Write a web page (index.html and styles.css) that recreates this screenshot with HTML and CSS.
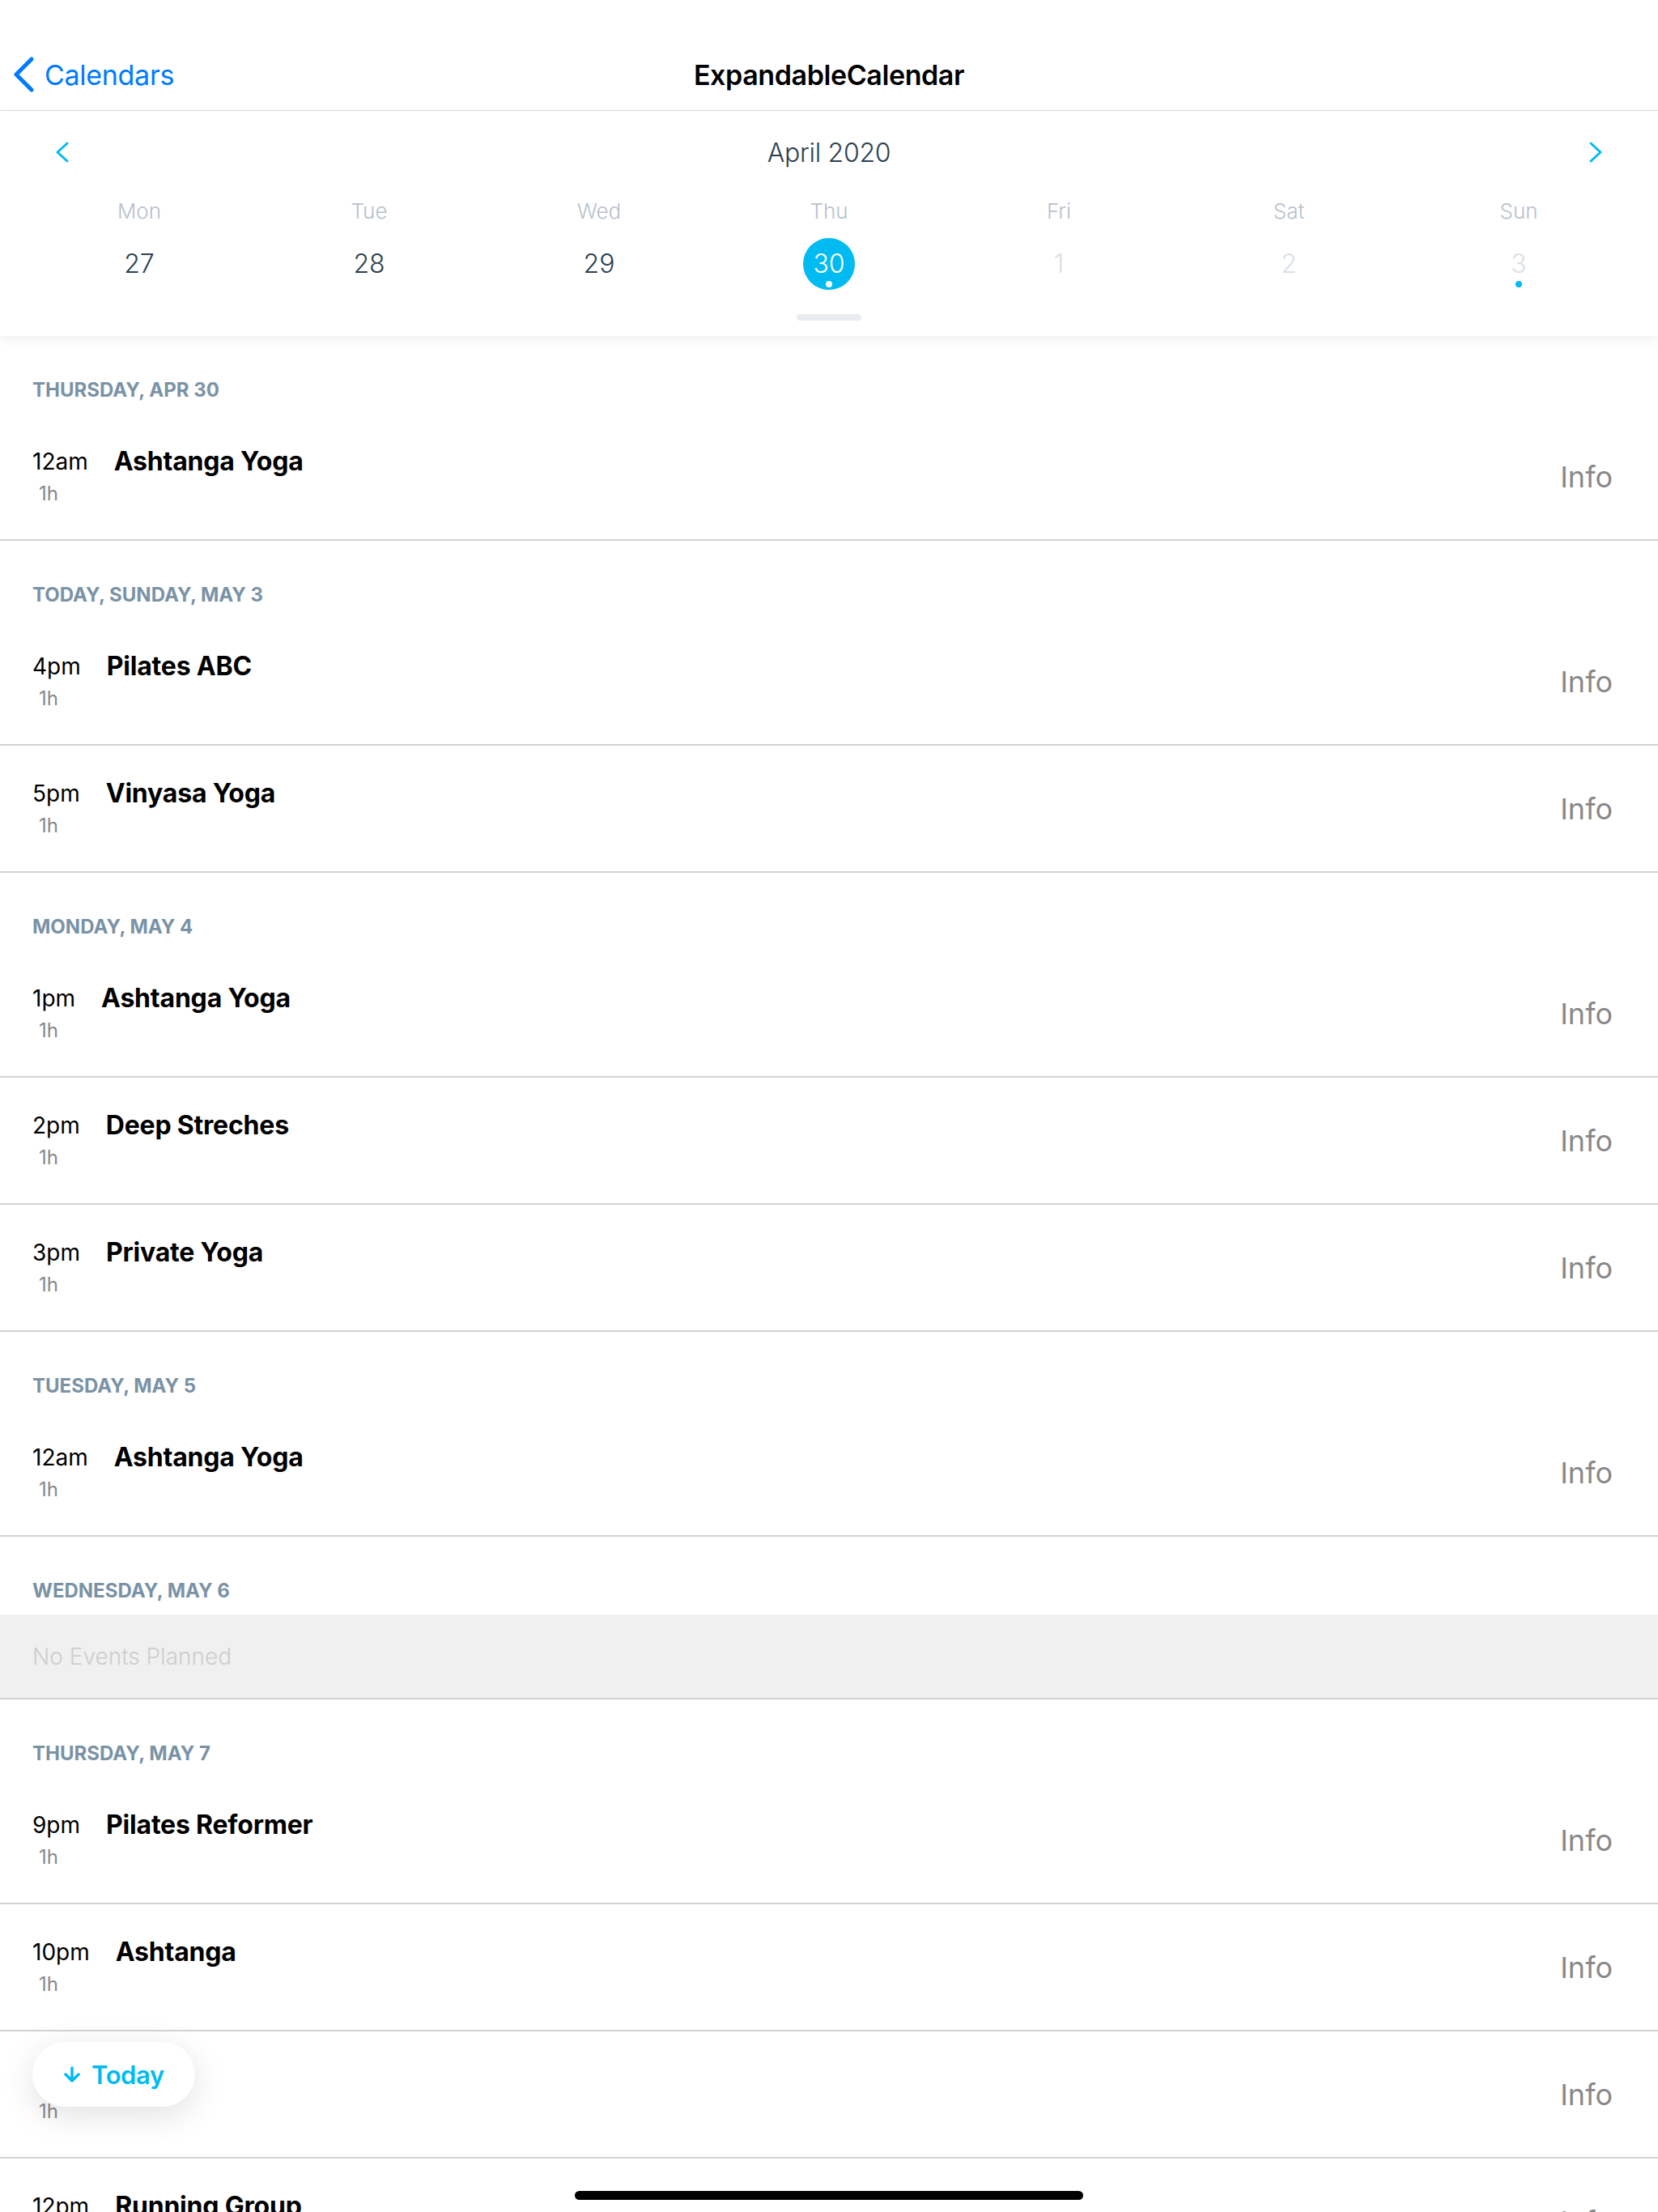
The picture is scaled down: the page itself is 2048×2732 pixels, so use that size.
FILE: index.html
```html
<!DOCTYPE html>
<html lang="en">
<head>
    <meta charset="UTF-8">
    <meta name="viewport" content="width=device-width, initial-scale=1.0">
    <title>ExpandableCalendar</title>
    <link rel="stylesheet" href="styles.css">
</head>
<body>

    <!-- Navigation Bar -->
    <header class="nav-bar">
        <a href="#" class="back-link">
            <svg class="back-chevron" width="26" height="44" viewBox="0 0 26 44">
                <polyline points="23,3 4,22 23,41" fill="none" stroke="#007aff" stroke-width="5" stroke-linecap="round" stroke-linejoin="round"/>
            </svg>
            Calendars
        </a>
        <h1 class="nav-title">ExpandableCalendar</h1>
        <div></div>
    </header>

    <!-- Week Calendar -->
    <section class="calendar">
        <div class="month-header">
            <svg width="20" height="28" viewBox="0 0 20 28">
                <polyline points="15,3 3,14 15,25" fill="none" stroke="#00bbf2" stroke-width="3" stroke-linecap="round" stroke-linejoin="round"/>
            </svg>
            <div class="month-title">April 2020</div>
            <svg width="20" height="28" viewBox="0 0 20 28">
                <polyline points="5,3 17,14 5,25" fill="none" stroke="#00bbf2" stroke-width="3" stroke-linecap="round" stroke-linejoin="round"/>
            </svg>
        </div>
        <div class="week">
            <div class="day"><span class="day-name">Mon</span><span class="day-num"><span>27</span><i class="dot"></i></span></div>
            <div class="day"><span class="day-name">Tue</span><span class="day-num"><span>28</span><i class="dot"></i></span></div>
            <div class="day"><span class="day-name">Wed</span><span class="day-num"><span>29</span><i class="dot"></i></span></div>
            <div class="day"><span class="day-name">Thu</span><span class="day-num selected"><span>30</span><i class="dot marked"></i></span></div>
            <div class="day"><span class="day-name">Fri</span><span class="day-num other-month"><span>1</span><i class="dot"></i></span></div>
            <div class="day"><span class="day-name">Sat</span><span class="day-num other-month"><span>2</span><i class="dot"></i></span></div>
            <div class="day"><span class="day-name">Sun</span><span class="day-num other-month"><span>3</span><i class="dot marked"></i></span></div>
        </div>
        <div class="knob"></div>
    </section>

    <!-- Agenda List -->
    <main class="agenda">
        <div class="section-title">Thursday, Apr 30</div>
        <div class="item">
            <div class="time-col"><span class="hour">12am</span><span class="duration">1h</span></div>
            <div class="item-title">Ashtanga Yoga</div>
            <a href="#" class="info">Info</a>
        </div>

        <div class="section-title">Today, Sunday, May 3</div>
        <div class="item">
            <div class="time-col"><span class="hour">4pm</span><span class="duration">1h</span></div>
            <div class="item-title">Pilates ABC</div>
            <a href="#" class="info">Info</a>
        </div>
        <div class="item">
            <div class="time-col"><span class="hour">5pm</span><span class="duration">1h</span></div>
            <div class="item-title">Vinyasa Yoga</div>
            <a href="#" class="info">Info</a>
        </div>

        <div class="section-title">Monday, May 4</div>
        <div class="item">
            <div class="time-col"><span class="hour">1pm</span><span class="duration">1h</span></div>
            <div class="item-title">Ashtanga Yoga</div>
            <a href="#" class="info">Info</a>
        </div>
        <div class="item">
            <div class="time-col"><span class="hour">2pm</span><span class="duration">1h</span></div>
            <div class="item-title">Deep Streches</div>
            <a href="#" class="info">Info</a>
        </div>
        <div class="item">
            <div class="time-col"><span class="hour">3pm</span><span class="duration">1h</span></div>
            <div class="item-title">Private Yoga</div>
            <a href="#" class="info">Info</a>
        </div>

        <div class="section-title">Tuesday, May 5</div>
        <div class="item">
            <div class="time-col"><span class="hour">12am</span><span class="duration">1h</span></div>
            <div class="item-title">Ashtanga Yoga</div>
            <a href="#" class="info">Info</a>
        </div>

        <div class="section-title">Wednesday, May 6</div>
        <div class="empty-item">No Events Planned</div>

        <div class="section-title">Thursday, May 7</div>
        <div class="item">
            <div class="time-col"><span class="hour">9pm</span><span class="duration">1h</span></div>
            <div class="item-title">Pilates Reformer</div>
            <a href="#" class="info">Info</a>
        </div>
        <div class="item">
            <div class="time-col"><span class="hour">10pm</span><span class="duration">1h</span></div>
            <div class="item-title">Ashtanga</div>
            <a href="#" class="info">Info</a>
        </div>
        <div class="item">
            <div class="time-col"><span class="hour">11pm</span><span class="duration">1h</span></div>
            <div class="item-title">TRX</div>
            <a href="#" class="info">Info</a>
        </div>
        <div class="item">
            <div class="time-col"><span class="hour">12pm</span><span class="duration">1h</span></div>
            <div class="item-title">Running Group</div>
            <a href="#" class="info">Info</a>
        </div>
    </main>

    <!-- Today Button -->
    <button class="today-button">
        <svg width="22" height="20" viewBox="0 0 22 20">
            <path d="M11 2 V18 M3 10 L11 18 L19 10" fill="none" stroke="#00bbf2" stroke-width="3.5" stroke-linecap="round" stroke-linejoin="round"/>
        </svg>
        Today
    </button>

    <!-- Home Indicator -->
    <div class="home-indicator"></div>

</body>
</html>
```

FILE: styles.css
```css
body {
    margin: 0;
    height: 2732px;
    overflow: hidden;
    position: relative;
    font-family: Inter, "Noto Sans", sans-serif;
    background-color: white;
    display: flex;
    flex-direction: column;
}

/* Navigation Bar */
.nav-bar {
    padding-top: 48px; /* status bar */
    height: 88px;
    border-bottom: 1px solid #e0e0e0;
    display: grid;
    grid-template-columns: 1fr auto 1fr;
    align-items: center;
    flex-shrink: 0;
}

.back-link {
    display: flex;
    align-items: center;
    gap: 13px;
    padding-left: 16px;
    color: #007aff;
    font-size: 34px;
    letter-spacing: -0.3px;
    text-decoration: none;
}

.nav-title {
    margin: 0;
    font-size: 34px;
    font-weight: 600;
    letter-spacing: -0.4px;
    color: #000;
}

/* Calendar */
.calendar {
    position: relative;
    z-index: 1;
    background-color: white;
    padding-top: 19px;
    padding-bottom: 19px;
    display: flex;
    flex-direction: column;
    align-items: center;
    box-shadow: 0 3px 14px rgba(0, 0, 0, 0.07);
    flex-shrink: 0;
}

.month-header {
    width: 100%;
    box-sizing: border-box;
    height: 64px;
    padding: 0 68px;
    display: flex;
    justify-content: space-between;
    align-items: center;
}

.month-title {
    font-size: 32px;
    font-weight: 300;
    letter-spacing: -0.3px;
    color: #2d4150;
}

.week {
    width: 100%;
    box-sizing: border-box;
    padding: 0 30px;
    margin-top: 25px;
    display: grid;
    grid-template-columns: repeat(7, 1fr);
}

.day {
    display: flex;
    flex-direction: column;
    align-items: center;
}

.day-name {
    font-size: 26px;
    line-height: 32px;
    font-weight: 300;
    color: #b6c1cd;
}

.day-num {
    margin-top: 17px;
    width: 64px;
    height: 64px;
    border-radius: 50%;
    box-sizing: border-box;
    padding-top: 13px;
    display: flex;
    flex-direction: column;
    align-items: center;
    font-size: 32px;
    line-height: 38px;
    font-weight: 300;
    color: #2d4150;
}

.day-num.other-month {
    color: #d9e1e8;
}

.day-num.selected {
    background-color: #00bbf2;
    color: white;
}

.dot {
    margin-top: 2px;
    width: 8px;
    height: 8px;
    border-radius: 50%;
}

.dot.marked {
    background-color: #00bbf2;
}

.selected .dot.marked {
    background-color: white;
}

.knob {
    margin-top: 30px;
    width: 80px;
    height: 8px;
    border-radius: 4px;
    background-color: #e8ecf0;
}

/* Agenda List */
.agenda {
    flex: 1;
    background-color: white;
}

.section-title {
    padding: 51px 40px 14px;
    font-size: 24px;
    line-height: 31px;
    font-weight: 700;
    text-transform: uppercase;
    color: #7a92a5;
}

.item {
    padding: 42px 56px 42px 40px;
    display: flex;
    align-items: flex-start;
    border-bottom: 2px solid #d3d3d3;
}

.time-col {
    display: flex;
    flex-direction: column;
}

.hour {
    font-size: 28px;
    line-height: 34px;
    color: #000;
}

.duration {
    margin: 8px 0 0 8px;
    font-size: 24px;
    line-height: 29px;
    color: #888;
}

.item-title {
    margin-left: 32px;
    font-size: 32px;
    line-height: 34px;
    font-weight: 700;
    letter-spacing: -0.2px;
    color: #000;
}

.info {
    margin-left: auto;
    align-self: center;
    font-size: 36px;
    color: #888;
    text-decoration: none;
}

.empty-item {
    padding: 35px 40px 34px;
    background-color: #f0f0f0;
    border-bottom: 2px solid #d3d3d3;
    font-size: 28px;
    line-height: 34px;
    font-weight: 300;
    color: #cdcdcd;
}

/* Today Button */
.today-button {
    position: absolute;
    left: 40px;
    top: 2522px;
    height: 80px;
    padding: 0 38px;
    border: none;
    border-radius: 40px;
    background-color: white;
    display: flex;
    align-items: center;
    gap: 13px;
    font-family: Inter, sans-serif;
    font-size: 31px;
    font-weight: 600;
    letter-spacing: -0.4px;
    color: #00bbf2;
    box-shadow: 0 10px 40px rgba(0, 0, 0, 0.12);
}

/* Home Indicator */
.home-indicator {
    position: absolute;
    bottom: 15px;
    left: 50%;
    transform: translateX(-50%);
    width: 628px;
    height: 11px;
    border-radius: 6px;
    background-color: black;
}
```
